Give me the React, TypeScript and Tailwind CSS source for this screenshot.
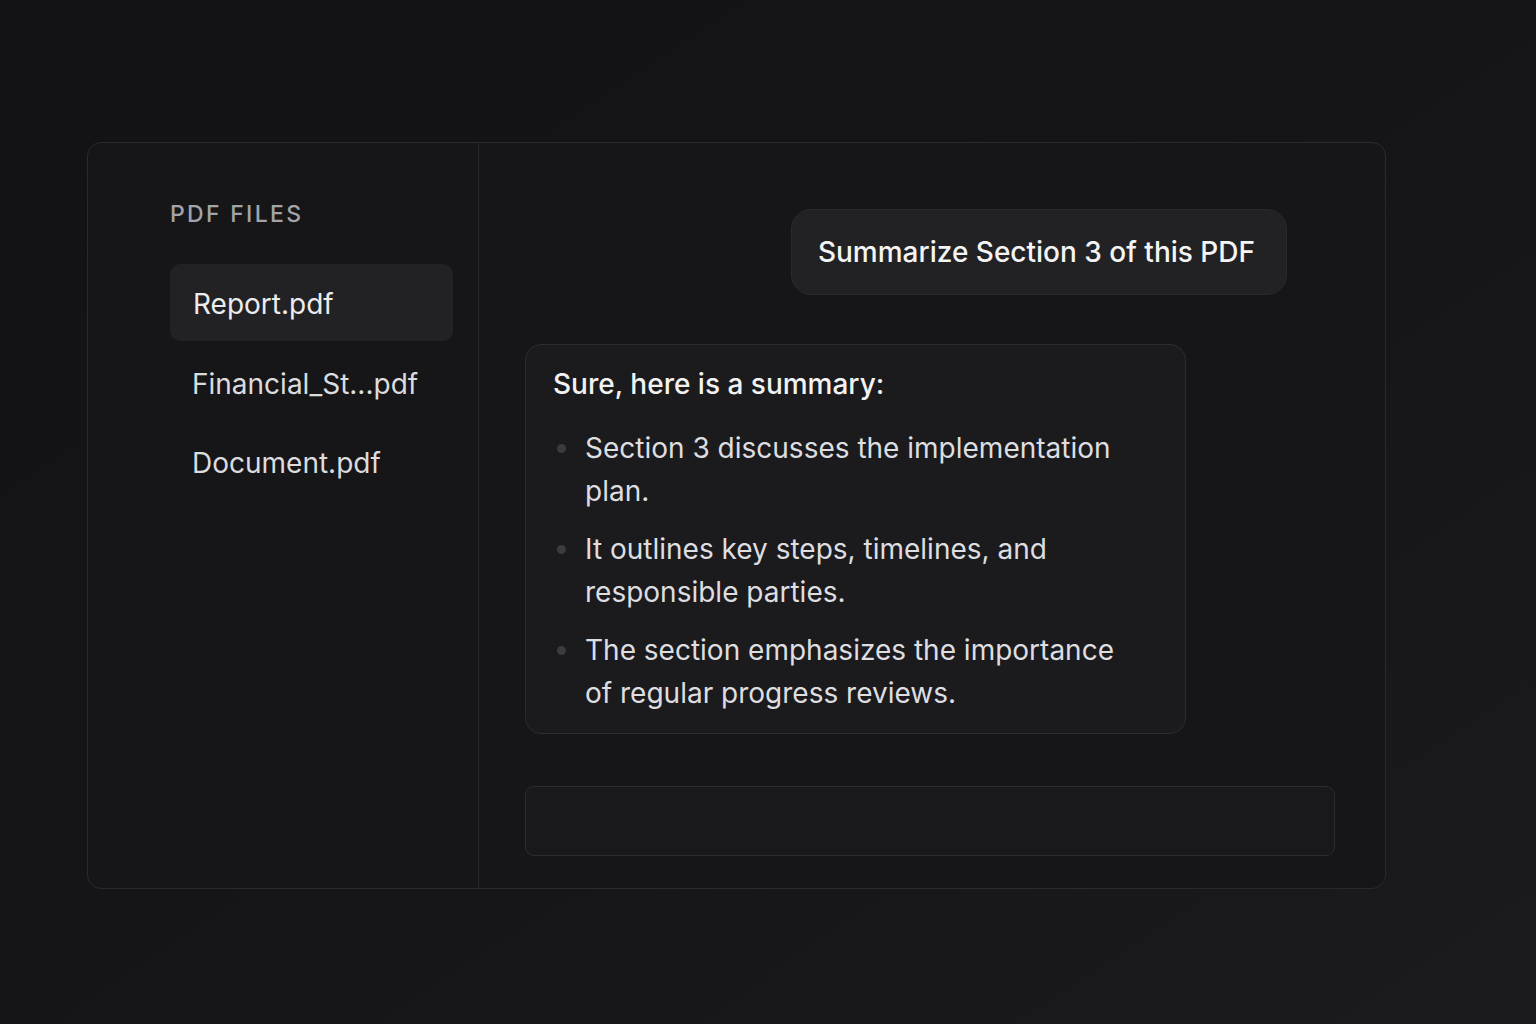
import React from "react";

const files = ["Report.pdf", "Financial_St...pdf", "Document.pdf"];

const bullets = [
  "Section 3 discusses the implementation plan.",
  "It outlines key steps, timelines, and responsible parties.",
  "The section emphasizes the importance of regular progress reviews.",
];

const App = () => {
  return (
    <div
      className="min-h-screen w-full bg-gradient-to-br from-[#131316] via-[#151518] to-[#1b1b1d] pt-[142px] pl-[87px] text-[#e6e6e8]"
      style={{ fontFamily: "Inter, 'Noto Sans', sans-serif" }}
    >
      <div className="flex h-[747px] w-[1299px] rounded-[14px] border border-[#2a2a2e] bg-[#161619]">
        {/* sidebar */}
        <div className="w-[391px] border-r border-[#27272b] pl-[82px] pr-[25px] pt-[58px]">
          <div className="text-[23px] leading-[26px] font-medium tracking-[0.1em] text-[#a3a3a8]">
            PDF FILES
          </div>
          <ul className="mt-[37px] flex flex-col">
            {files.map((f, i) => (
              <li
                key={f}
                className={
                  i === 0
                    ? "flex h-[77px] items-center rounded-[10px] bg-[#222225] px-[23px] pt-[2px] text-[28px] text-[#ececee]"
                    : "flex h-[79px] items-center px-[22px] pt-[6px] text-[28px] text-[#dcdcdf]"
                }
              >
                {f}
              </li>
            ))}
          </ul>
        </div>

        {/* chat */}
        <div className="flex flex-1 flex-col pl-[46px] pr-[50px] pt-[66px] pb-[32px]">
          <div className="flex justify-end pr-[48px]">
            <div className="flex h-[86px] items-center rounded-[20px] border border-[#2a2a2e] bg-[#222225] pl-[26px] pr-[31px] text-[28px] font-medium text-[#f4f4f5]">
              Summarize Section 3 of this PDF
            </div>
          </div>

          <div className="mt-[49px] w-[661px] rounded-[16px] border border-[#2c2c30] bg-[#1b1b1e] pl-[27px] pr-[40px] pt-[20px] pb-[18px]">
            <p className="text-[28px] leading-[38px] font-medium text-[#f2f2f3]">
              Sure, here is a summary:
            </p>
            <ul className="mt-[24px] flex flex-col gap-[15px]">
              {bullets.map((b) => (
                <li key={b} className="flex text-[28px] leading-[43px] text-[#dedee1]">
                  <span className="mt-[17px] ml-[4px] mr-[19px] h-[9px] w-[9px] shrink-0 rounded-full bg-[#3a3a3f]" />
                  <span>{b}</span>
                </li>
              ))}
            </ul>
          </div>

          <div className="mt-auto h-[70px] w-full rounded-[9px] border border-[#2c2c30] bg-[#19191c]" />
        </div>
      </div>
    </div>
  );
};

export default App;
